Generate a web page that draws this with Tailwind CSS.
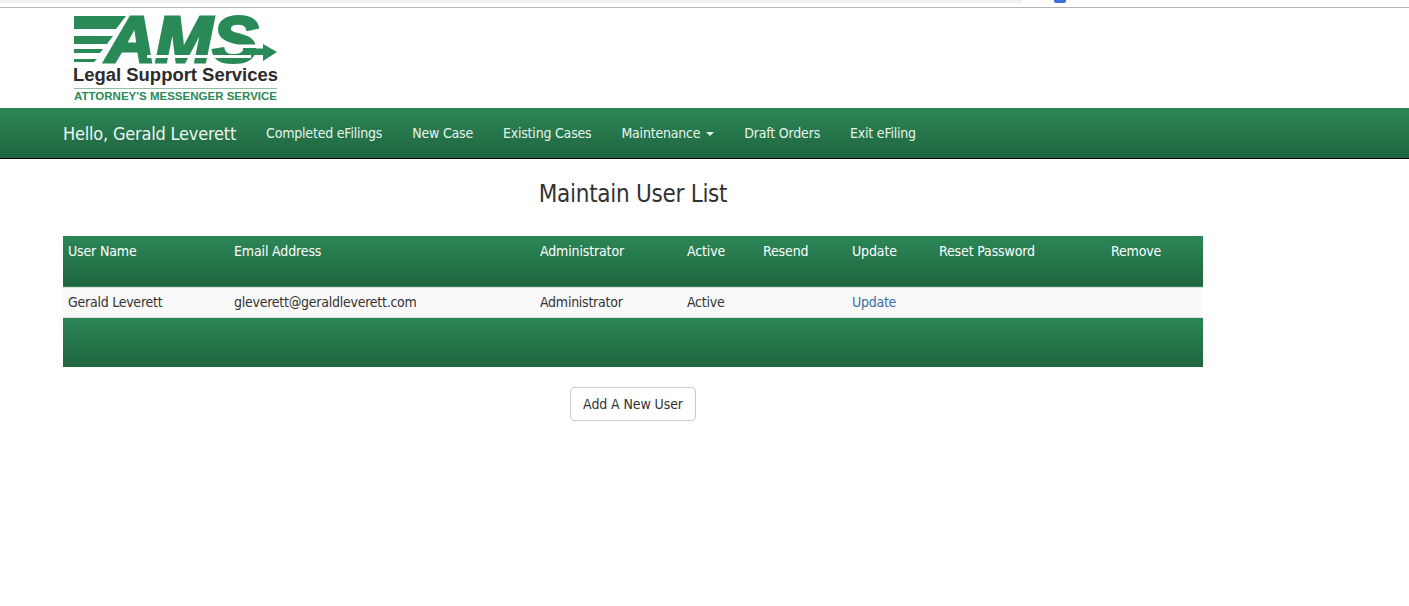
<!DOCTYPE html>
<html lang="en">
<head>
<meta charset="utf-8">
<title>Maintain User List</title>
<script src="https://cdn.jsdelivr.net/npm/@tailwindcss/browser@4"></script>
</head>
<body class="bg-white text-[#333] text-[14px] font-['DejaVu_Sans_Condensed','DejaVu_Sans',sans-serif]">
<div class="relative h-[8px] border-b border-[#b4b4b4] overflow-hidden">
  <div class="h-[3px] w-[1022px] bg-[#f1f1f1] rounded-br-[6px]"></div>
  <div class="absolute left-[1054px] top-0 w-[12px] h-[3px] bg-[#3f71d6] rounded-b-[2px]"></div>
</div>
<header class="h-[100px] pl-[73px] pt-[7px]">
  <svg width="206" height="88" viewBox="0 0 206 88" class="block overflow-visible">
    <g fill="#2a8a57">
      <polygon points="1,1 53,1 43,14 1,14"/>
      <polygon points="1,21 40,21 34,29 1,29"/>
      <polygon points="1,34 30,34 27,38 1,38"/>
      <polygon points="1,44 24,44 21,47 1,47"/>
      <text x="33" y="46.5" font-family="Liberation Sans" font-weight="700" font-style="italic" font-size="64" textLength="152" lengthAdjust="spacingAndGlyphs" stroke="#2a8a57" stroke-width="3">AMS</text>
      <rect x="74" y="40" width="104" height="3" fill="#fff"/>
      <polygon points="160,29.5 190,29.5 190,33 160,33" fill="#fff"/>
      <polygon points="172,33.5 190,33.5 190,29 204,37 190,46 190,40 172,40"/>
      <rect x="1" y="73" width="203" height="1" fill="#8fbfa3"/>
      <text x="1" y="85" font-family="Liberation Sans" font-weight="700" font-size="11.5" textLength="203" lengthAdjust="spacingAndGlyphs">ATTORNEY'S MESSENGER SERVICE</text>
    </g>
    <text x="0" y="66" fill="#2b2b2b" font-family="Liberation Sans" font-weight="700" font-size="18" textLength="205" lengthAdjust="spacingAndGlyphs">Legal Support Services</text>
  </svg>
</header>
<nav class="h-[51px] border-b border-black bg-gradient-to-b from-[#2c8757] to-[#1f6540] pl-[63px] flex items-center text-[#e8f3ec] tracking-[-0.2px]">
  <a class="text-[18px] tracking-[-0.2px] mr-[30px] text-[#eef6f1]">Hello, Gerald Leverett</a>
  <a class="mr-[30px]">Completed eFilings</a>
  <a class="mr-[30px]">New Case</a>
  <a class="mr-[30px]">Existing Cases</a>
  <a class="mr-[30px] flex items-center">Maintenance<span class="ml-[6px] mt-[1px] border-x-[4px] border-x-transparent border-t-[4px] border-t-[#e8f3ec]"></span></a>
  <a class="mr-[30px]">Draft Orders</a>
  <a>Exit eFiling</a>
</nav>
<main class="w-[1140px] ml-[63px]">
  <h1 class="h-[77px] pt-[18px] text-center text-[24px] leading-[34px] tracking-[-0.28px] text-[#333]">Maintain User List</h1>
  <table class="w-[1140px] table-fixed border-collapse tracking-[-0.25px]">
    <colgroup>
      <col class="w-[166px]"><col class="w-[306px]"><col class="w-[147px]"><col class="w-[76px]"><col class="w-[89px]"><col class="w-[87px]"><col class="w-[172px]"><col class="w-[97px]">
    </colgroup>
    <thead>
      <tr class="h-[51px] bg-gradient-to-b from-[#2c8757] to-[#1f6540] text-white border-b border-[#ddd] tracking-[-0.14px]">
        <th class="px-[5px] pt-[5px] align-top text-left font-normal">User Name</th>
        <th class="px-[5px] pt-[5px] align-top text-left font-normal">Email Address</th>
        <th class="px-[5px] pt-[5px] align-top text-left font-normal">Administrator</th>
        <th class="px-[5px] pt-[5px] align-top text-left font-normal">Active</th>
        <th class="px-[5px] pt-[5px] align-top text-left font-normal">Resend</th>
        <th class="px-[5px] pt-[5px] align-top text-left font-normal">Update</th>
        <th class="px-[5px] pt-[5px] align-top text-left font-normal">Reset Password</th>
        <th class="px-[5px] pt-[5px] align-top text-left font-normal">Remove</th>
      </tr>
    </thead>
    <tbody>
      <tr class="h-[30px] bg-[#f9f9f9] border-b border-[#ddd]">
        <td class="px-[5px]">Gerald Leverett</td>
        <td class="px-[5px]">gleverett@geraldleverett.com</td>
        <td class="px-[5px]">Administrator</td>
        <td class="px-[5px]">Active</td>
        <td class="px-[5px]"></td>
        <td class="px-[5px]"><a class="text-[#3a6ea5]">Update</a></td>
        <td class="px-[5px]"></td>
        <td class="px-[5px]"></td>
      </tr>
    </tbody>
    <tfoot>
      <tr class="h-[50px] bg-gradient-to-b from-[#2c8757] to-[#1f6540]"><td colspan="8"></td></tr>
    </tfoot>
  </table>
  <div class="flex justify-center mt-[20px]">
    <button class="h-[34px] w-[126px] border border-[#ccc] rounded-[4px] bg-white text-[#333] tracking-[-0.1px]">Add A New User</button>
  </div>
</main>
</body>
</html>
